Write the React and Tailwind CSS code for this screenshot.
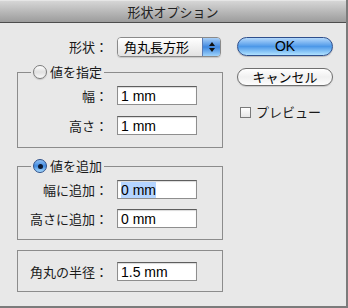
import React from 'react'

const jp = { fontFamily: '"Noto Sans CJK JP", "Noto Sans", sans-serif' }

const Field = ({ value, selected }) => (
  <div className="w-[80px] h-[19px] bg-white border border-[#8e8e8e] border-t-[#5e5e5e] shadow-[inset_0_1px_1px_rgba(0,0,0,0.15)] flex items-center pl-[3px] text-[14px] text-black font-['Liberation_Sans',sans-serif]">
    <span className={selected ? 'bg-[#b5d5ff] leading-[16px]' : 'leading-[16px]'}>{value}</span>
  </div>
)

const Row = ({ label, value, selected, labelW }) => (
  <div className="flex items-center">
    <div className={`${labelW} text-right text-[13px] text-[#1a1a1a] leading-[16px]`} style={jp}>{label}</div>
    <div className="ml-[9px]">
      <Field value={value} selected={selected} />
    </div>
  </div>
)

const Radio = ({ on }) =>
  on ? (
    <div className="w-[14px] h-[14px] rounded-full border border-[#2d4f8a] bg-gradient-to-b from-[#8fc0f4] via-[#3f8ae0] to-[#a9dcff] flex items-center justify-center">
      <div className="w-[5px] h-[5px] rounded-full bg-[#0d1a33]" />
    </div>
  ) : (
    <div className="w-[14px] h-[14px] rounded-full border border-[#7a7a7a] bg-gradient-to-b from-[#ffffff] via-[#e0e0e0] to-[#fafafa] shadow-[0_1px_1px_rgba(0,0,0,0.15)]" />
  )

const App = () => {
  return (
    <div className="w-[348px] h-[308px] bg-white" style={jp}>
      <div className="w-[348px] h-[308px] flex flex-col bg-[#e8e8e8] border-r-2 border-b-2 border-[#7b7b7b]">
        {/* title bar */}
        <div className="h-[23px] shrink-0 flex items-center justify-center bg-gradient-to-b from-[#d6d6d6] to-[#9c9c9c] border-t border-[#e6e6e6] border-b border-b-[#4d4d4d] text-[13px] text-[#222]">
          形状オプション
        </div>

        <div className="flex pt-[14px] pl-[16px]">
          {/* left column */}
          <div className="w-[206px] flex flex-col">
            <div className="flex items-center h-[20px]">
              <div className="w-[92px] text-right text-[13px] text-[#1a1a1a]">形状：</div>
              <div className="ml-[9px] w-[104px] h-[20px] flex rounded-[4px] border border-[#8a8a8a] overflow-hidden shadow-[0_1px_1px_rgba(0,0,0,0.15)]">
                <div className="flex-1 bg-gradient-to-b from-[#ffffff] via-[#f1f1f1] to-[#e2e2e2] flex items-center pl-[6px] text-[13px] text-black">
                  角丸長方形
                </div>
                <div className="w-[18px] border-l border-[#5a7bb5] bg-gradient-to-b from-[#a8cff7] via-[#3d86de] to-[#9ed3fb] flex flex-col items-center justify-center gap-[2px]">
                  <div className="w-0 h-0 border-l-[3px] border-r-[3px] border-b-[4px] border-l-transparent border-r-transparent border-b-[#111]" />
                  <div className="w-0 h-0 border-l-[3px] border-r-[3px] border-t-[4px] border-l-transparent border-r-transparent border-t-[#111]" />
                </div>
              </div>
            </div>

            <fieldset className="mt-[7px] ml-[1px] w-[206px] border border-[#8c8c8c] pb-[12px]">
              <legend className="ml-[13px] px-[2px] flex items-center gap-[3px] text-[13px] leading-[16px] text-[#1a1a1a]">
                <Radio on={false} />
                <span>値を指定</span>
              </legend>
              <div className="flex flex-col gap-[11px] pt-[6px]">
                <Row label="幅：" value="1 mm" labelW="w-[90px]" />
                <Row label="高さ：" value="1 mm" labelW="w-[90px]" />
              </div>
            </fieldset>

            <fieldset className="mt-[10px] ml-[1px] w-[206px] border border-[#8c8c8c] pb-[11px]">
              <legend className="ml-[13px] px-[2px] flex items-center gap-[3px] text-[13px] leading-[16px] text-[#1a1a1a]">
                <Radio on={true} />
                <span>値を追加</span>
              </legend>
              <div className="flex flex-col gap-[10px] pt-[6px]">
                <Row label="幅に追加：" value="0 mm" selected labelW="w-[90px]" />
                <Row label="高さに追加：" value="0 mm" labelW="w-[90px]" />
              </div>
            </fieldset>

            <div className="mt-[10px] ml-[1px] w-[206px] border border-[#8c8c8c] pt-[11px] pb-[10px]">
              <Row label="角丸の半径：" value="1.5 mm" labelW="w-[90px]" />
            </div>
          </div>

          {/* right column */}
          <div className="ml-[15px] w-[96px] flex flex-col">
            <div className="h-[19px] rounded-full border border-[#2f4f8c] bg-gradient-to-b from-[#b3d8fb] via-[#4c98e8] to-[#b0e2ff] flex items-center justify-center text-[14px] text-black font-['Liberation_Sans',sans-serif] shadow-[0_1px_1px_rgba(0,0,0,0.2)]">
              OK
            </div>
            <div className="mt-[12px] h-[18px] rounded-full border border-[#6e6e6e] bg-gradient-to-b from-[#ffffff] via-[#f0f0f0] to-[#fdfdfd] flex items-center justify-center text-[13px] text-black shadow-[0_1px_1px_rgba(0,0,0,0.15)]">
              キャンセル
            </div>
            <div className="mt-[18px] flex items-center gap-[5px] pl-[3px] text-[13px] text-[#1a1a1a] leading-[16px]">
              <div className="w-[11px] h-[11px] border border-[#7a7a7a] bg-gradient-to-b from-[#ffffff] to-[#e6e6e6]" />
              <span>プレビュー</span>
            </div>
          </div>
        </div>
      </div>
    </div>
  )
}

export default App
